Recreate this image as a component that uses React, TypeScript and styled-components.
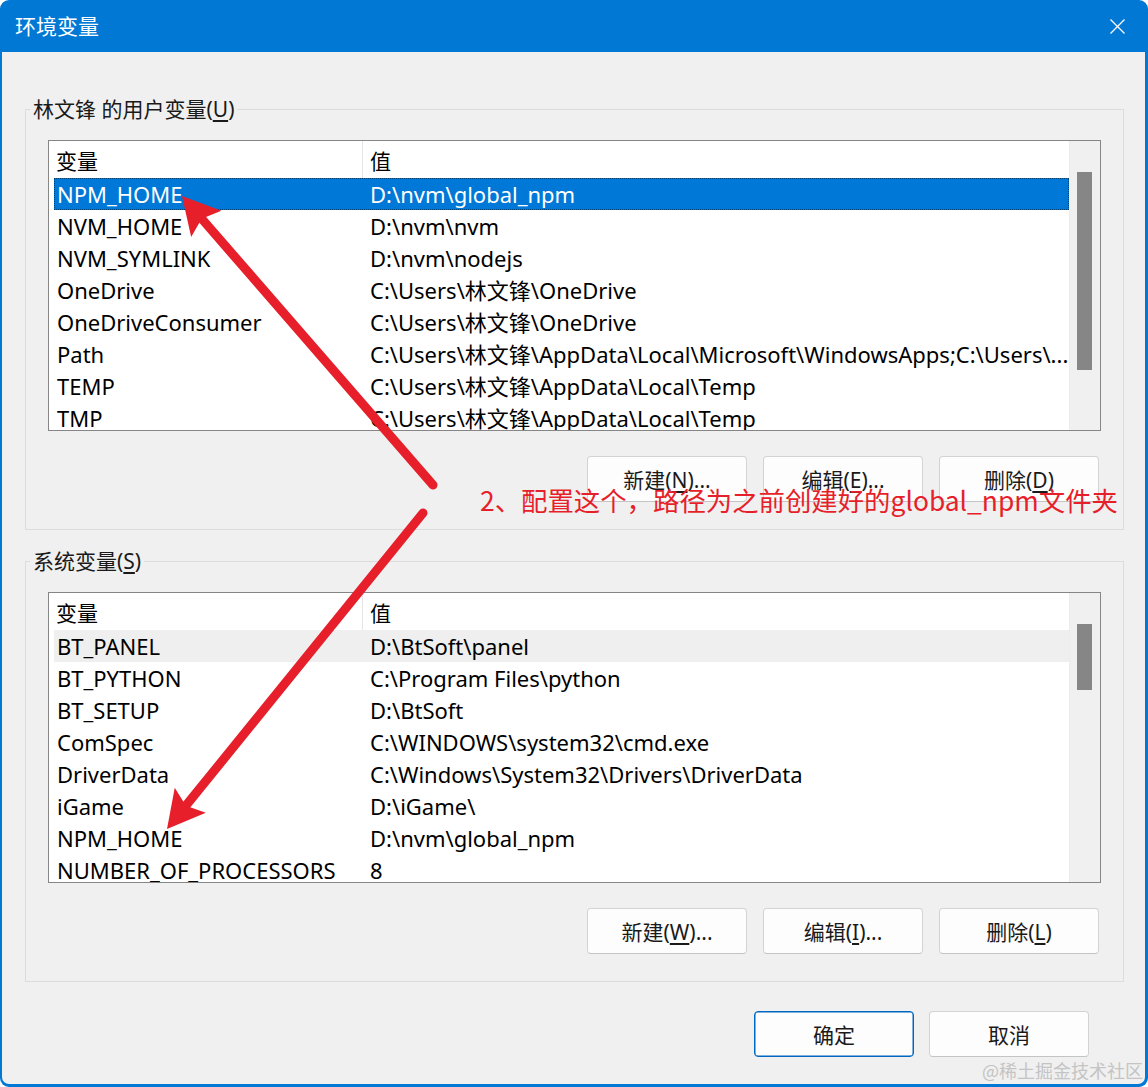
import React from 'react';
import styled, { createGlobalStyle } from 'styled-components';

const accent = '#0078d4';
const panel = '#f0f0f0';
const annotationRed = '#e61f2a';
const uiFont = `"Noto Sans", "Noto Sans CJK SC", sans-serif`;

interface Variable {
  name: string
  value: string
}

const userVars: Variable[] = [
  { name: 'NPM_HOME', value: 'D:\\nvm\\global_npm' },
  { name: 'NVM_HOME', value: 'D:\\nvm\\nvm' },
  { name: 'NVM_SYMLINK', value: 'D:\\nvm\\nodejs' },
  { name: 'OneDrive', value: 'C:\\Users\\林文锋\\OneDrive' },
  { name: 'OneDriveConsumer', value: 'C:\\Users\\林文锋\\OneDrive' },
  { name: 'Path', value: 'C:\\Users\\林文锋\\AppData\\Local\\Microsoft\\WindowsApps;C:\\Users\\...' },
  { name: 'TEMP', value: 'C:\\Users\\林文锋\\AppData\\Local\\Temp' },
  { name: 'TMP', value: 'C:\\Users\\林文锋\\AppData\\Local\\Temp' },
];

const systemVars: Variable[] = [
  { name: 'BT_PANEL', value: 'D:\\BtSoft\\panel' },
  { name: 'BT_PYTHON', value: 'C:\\Program Files\\python' },
  { name: 'BT_SETUP', value: 'D:\\BtSoft' },
  { name: 'ComSpec', value: 'C:\\WINDOWS\\system32\\cmd.exe' },
  { name: 'DriverData', value: 'C:\\Windows\\System32\\Drivers\\DriverData' },
  { name: 'iGame', value: 'D:\\iGame\\' },
  { name: 'NPM_HOME', value: 'D:\\nvm\\global_npm' },
  { name: 'NUMBER_OF_PROCESSORS', value: '8' },
];

const GlobalStyle = createGlobalStyle`
  html, body {
    margin: 0;
    padding: 0;
    background: #ffffff;
  }
  * {
    box-sizing: border-box;
  }
`;

const CloseIcon = () => (
  <svg width="15" height="15" viewBox="0 0 15 15">
    <path d="M0.5 0.5 L14.5 14.5 M14.5 0.5 L0.5 14.5" stroke="#ffffff" strokeWidth="1.3" fill="none" />
  </svg>
);

// arrow from tail to tip, with a notched head
const Arrow = ({ tail, tip }: { tail: [number, number], tip: [number, number] }) => {
  const dx = tail[0] - tip[0];
  const dy = tail[1] - tip[1];
  const len = Math.hypot(dx, dy);
  const ux = dx / len;
  const uy = dy / len;
  const px = -uy;
  const py = ux;
  const base: [number, number] = [tip[0] + ux * 37, tip[1] + uy * 37];
  const notch: [number, number] = [tip[0] + ux * 30, tip[1] + uy * 30];
  const w1 = [base[0] + px * 20, base[1] + py * 20];
  const w2 = [base[0] - px * 20, base[1] - py * 20];
  return (
    <g>
      <line x1={tail[0]} y1={tail[1]} x2={notch[0]} y2={notch[1]}
        stroke={annotationRed} strokeWidth="9" strokeLinecap="round" />
      <polygon
        points={`${tip[0]},${tip[1]} ${w1[0]},${w1[1]} ${notch[0]},${notch[1]} ${w2[0]},${w2[1]}`}
        fill={annotationRed} />
    </g>
  );
};

interface ListProps {
  rows: Variable[]
  selected?: number
  hovered?: number
  thumbTop: number
  thumbHeight: number
}

const VariableList = ({ rows, selected, hovered, thumbTop, thumbHeight }: ListProps) => (
  <ListFrame>
    <Table>
      <HeaderRow>
        <HeaderCell divider>变量</HeaderCell>
        <HeaderCell>值</HeaderCell>
      </HeaderRow>
      {rows.map((row, i) => (
        <Row key={row.name + i} selected={i === selected} hovered={i === hovered}>
          <Cell>{row.name}</Cell>
          <Cell value>{row.value}</Cell>
        </Row>
      ))}
    </Table>
    <ScrollTrack>
      <ScrollThumb top={thumbTop} size={thumbHeight} />
    </ScrollTrack>
  </ListFrame>
);

export default function App() {
  return (
    <>
      <GlobalStyle />
      <Window>
        <TitleBar>
          <Title>环境变量</Title>
          <CloseIcon />
        </TitleBar>
        <Body>
          <Group>
            <GroupLabel>林文锋 的用户变量(<u>U</u>)</GroupLabel>
            <VariableList rows={userVars} selected={0} thumbTop={31} thumbHeight={198} />
            <ButtonRow>
              <DialogButton>新建(<u>N</u>)...</DialogButton>
              <DialogButton>编辑(<u>E</u>)...</DialogButton>
              <DialogButton>删除(<u>D</u>)</DialogButton>
            </ButtonRow>
          </Group>
          <Group>
            <GroupLabel>系统变量(<u>S</u>)</GroupLabel>
            <VariableList rows={systemVars} hovered={0} thumbTop={31} thumbHeight={66} />
            <ButtonRow>
              <DialogButton>新建(<u>W</u>)...</DialogButton>
              <DialogButton>编辑(<u>I</u>)...</DialogButton>
              <DialogButton>删除(<u>L</u>)</DialogButton>
            </ButtonRow>
          </Group>
          <Footer>
            <DialogButton primary>确定</DialogButton>
            <DialogButton>取消</DialogButton>
          </Footer>
        </Body>

        <Overlay width="1148" height="1087" viewBox="0 0 1148 1087">
          <Arrow tail={[433, 485]} tip={[182, 196]} />
          <Arrow tail={[423, 513]} tip={[167, 829]} />
        </Overlay>
        <Note>2、配置这个，路径为之前创建好的global_npm文件夹</Note>
        <Watermark>@稀土掘金技术社区</Watermark>
      </Window>
    </>
  );
}

const Window = styled.div`
  position: relative;
  width: 1148px;
  height: 1087px;
  display: flex;
  flex-direction: column;
  background: ${accent};
  border-radius: 9px;
  overflow: hidden;
  font-family: ${uiFont};
  font-size: 21px;
  color: #000000;
`;

const TitleBar = styled.div`
  height: 52px;
  flex: none;
  display: flex;
  align-items: center;
  justify-content: space-between;
  padding: 0 23px 0 15px;
  color: #ffffff;
`;

const Title = styled.div`
  font-size: 21px;
  line-height: 28px;
`;

const Body = styled.div`
  flex: 1;
  margin: 0 3px 3px 2px;
  background: ${panel};
  border-radius: 0 0 7px 7px;
  padding: 43px 21px 0 23px;
  display: flex;
  flex-direction: column;
`;

const Group = styled.fieldset`
  margin: 0 0 17px;
  min-width: 0;
  padding: 17px 22px 27px;
  border: 1px solid #dcdcdc;
`;

const GroupLabel = styled.legend`
  padding: 0 3px;
  margin-left: -18px;
  line-height: 28px;
  color: #1a1a1a;

  u {
    text-underline-offset: 3px;
  }
`;

const ListFrame = styled.div`
  height: 291px;
  display: grid;
  grid-template-columns: 1fr 31px;
  background: #ffffff;
  border: 1px solid #868686;
  overflow: hidden;
`;

const Table = styled.div`
  min-width: 0;
  overflow: hidden;
`;

const HeaderRow = styled.div`
  height: 37px;
  display: grid;
  grid-template-columns: 314px 1fr;
`;

const HeaderCell = styled.div<{ divider?: boolean }>`
  display: flex;
  align-items: center;
  padding-left: 7px;
  border-right: ${p => (p.divider ? '1px solid #e5e5e5' : 'none')};
`;

const Row = styled.div<{ selected?: boolean, hovered?: boolean }>`
  height: 32px;
  margin-left: 5px;
  display: grid;
  grid-template-columns: 309px 1fr;
  align-items: center;
  font-size: 22px;
  background: ${p => (p.selected ? '#0078d7' : p.hovered ? '#efefef' : 'transparent')};
  color: ${p => (p.selected ? '#ffffff' : '#000000')};
  outline: ${p => (p.selected ? '1px dotted rgba(0, 0, 0, 0.45)' : 'none')};
  outline-offset: -1px;
`;

const Cell = styled.div<{ value?: boolean }>`
  padding-left: ${p => (p.value ? '7px' : '3px')};
  white-space: nowrap;
  overflow: hidden;
  text-overflow: ellipsis;
  line-height: 32px;
`;

const ScrollTrack = styled.div`
  background: ${panel};
  border-left: 1px solid #ececec;
  padding-left: 7px;
`;

const ScrollThumb = styled.div<{ top: number, size: number }>`
  width: 15px;
  margin-top: ${p => p.top}px;
  height: ${p => p.size}px;
  background: #868686;
`;

const ButtonRow = styled.div`
  display: flex;
  justify-content: flex-end;
  gap: 16px;
  margin-top: 25px;
  padding-right: 2px;
`;

const DialogButton = styled.button<{ primary?: boolean }>`
  width: 160px;
  height: 46px;
  padding: 0;
  font-family: ${uiFont};
  font-size: 21px;
  color: #1a1a1a;
  background: #fdfdfd;
  border: 1px solid ${p => (p.primary ? '#0067c0' : '#d3d3d3')};
  border-bottom-color: ${p => (p.primary ? '#0067c0' : '#c4c4c4')};
  border-radius: 4px;
  box-shadow: ${p => (p.primary ? 'inset 0 0 0 0.5px #0067c0' : 'none')};

  u {
    text-underline-offset: 3px;
  }
`;

const Footer = styled.div`
  display: flex;
  justify-content: flex-end;
  gap: 15px;
  margin-top: 12px;
  padding-right: 35px;
`;

const Overlay = styled.svg`
  position: absolute;
  left: 0;
  top: 0;
  pointer-events: none;
`;

const Note = styled.div`
  position: absolute;
  left: 480px;
  top: 483px;
  font-family: "Noto Sans CJK SC", sans-serif;
  font-size: 26.4px;
  line-height: 34px;
  color: ${annotationRed};
  white-space: nowrap;
`;

const Watermark = styled.div`
  position: absolute;
  left: 982px;
  top: 1058px;
  font-family: "Noto Sans CJK SC", sans-serif;
  font-size: 18px;
  line-height: 24px;
  color: #c4c4c4;
  white-space: nowrap;
`;
